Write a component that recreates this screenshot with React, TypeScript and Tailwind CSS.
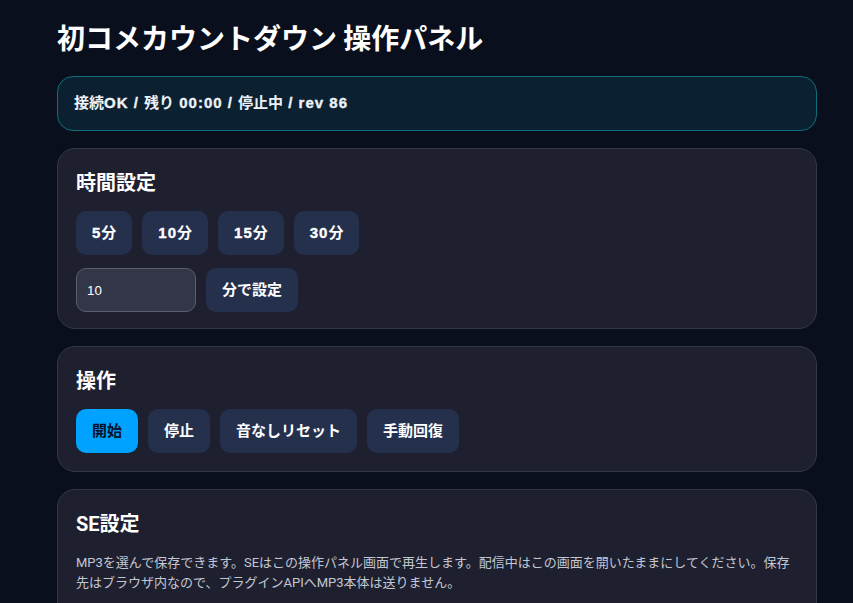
const body = '"Roboto", "Noto Sans CJK JP", sans-serif';

// ASCII runs in the reference render slightly wider and heavier than the CJK parts
function Heavy({ text }: { text: string }) {
  const parts = text.split(/([\x20-\x7E]+)/).filter((p) => p !== '');
  return (
    <>
      {parts.map((p, i) =>
        /^[\x20-\x7E]+$/.test(p) ? (
          <span key={i} className="tracking-[1px] [-webkit-text-stroke:0.35px_currentColor]">
            {p}
          </span>
        ) : (
          <span key={i}>{p}</span>
        )
      )}
    </>
  );
}

function Btn({ label, primary = false }: { label: string; primary?: boolean }) {
  return (
    <button
      className={`h-[44px] px-[16px] rounded-[10px] text-[15px] font-bold font-['Liberation_Sans','Noto_Sans_CJK_JP',sans-serif] ${
        primary ? 'bg-[#00a2ff] text-[#06122a]' : 'bg-[#25304d] text-white'
      }`}
    >
      <Heavy text={label} />
    </button>
  );
}

function Card({ title, children }: { title: string; children: React.ReactNode }) {
  return (
    <section className="rounded-[18px] border border-[#33374a] bg-[#1e2030] px-[18px] pt-[20px] pb-[18px]">
      <h2 className="text-[20px] font-bold text-white leading-[28px] mb-[14px]">{title}</h2>
      {children}
    </section>
  );
}

export default function App() {
  return (
    <div className="min-h-[603px] bg-[#0a0f1e] text-white" style={{ fontFamily: body }}>
      <div className="w-[760px] ml-[57px] pt-[18px] flex flex-col gap-[17px]">
        <h1 className="text-[28px] font-bold leading-[38px] font-['Noto_Sans_CJK_JP',sans-serif] mb-[3px]">
          初コメカウントダウン 操作パネル
        </h1>

        <div className="rounded-[16px] border border-[#0f6e7a] bg-[#0b2131] px-[16px] h-[55px] flex items-center">
          <span className="text-[15px] font-bold font-['Liberation_Sans','Noto_Sans_CJK_JP',sans-serif] text-[#eef2f8]">
            <Heavy text="接続OK / 残り 00:00 / 停止中 / rev 86" />
          </span>
        </div>

        <Card title="時間設定">
          <div className="flex gap-[10px]">
            <Btn label="5分" />
            <Btn label="10分" />
            <Btn label="15分" />
            <Btn label="30分" />
          </div>
          <div className="flex gap-[10px] mt-[13px] -mb-[2px]">
            <input
              defaultValue="10"
              className="w-[120px] h-[44px] rounded-[10px] border border-[#5b5e70] bg-[#333646] px-[10px] text-[13.33px] text-white outline-none font-['Liberation_Sans',sans-serif]"
            />
            <Btn label="分で設定" />
          </div>
        </Card>

        <Card title="操作">
          <div className="flex gap-[10px]">
            <Btn label="開始" primary />
            <Btn label="停止" />
            <Btn label="音なしリセット" />
            <Btn label="手動回復" />
          </div>
        </Card>

        <Card title="SE設定">
          <p className="text-[13px] leading-[20px] text-[#c3c7d3] pt-[1px]">
            MP3を選んで保存できます。SEはこの操作パネル画面で再生します。配信中はこの画面を開いたままにしてください。保存先はブラウザ内なので、プラグインAPIへMP3本体は送りません。
          </p>
          <div className="h-[40px]" />
        </Card>
      </div>
    </div>
  );
}
